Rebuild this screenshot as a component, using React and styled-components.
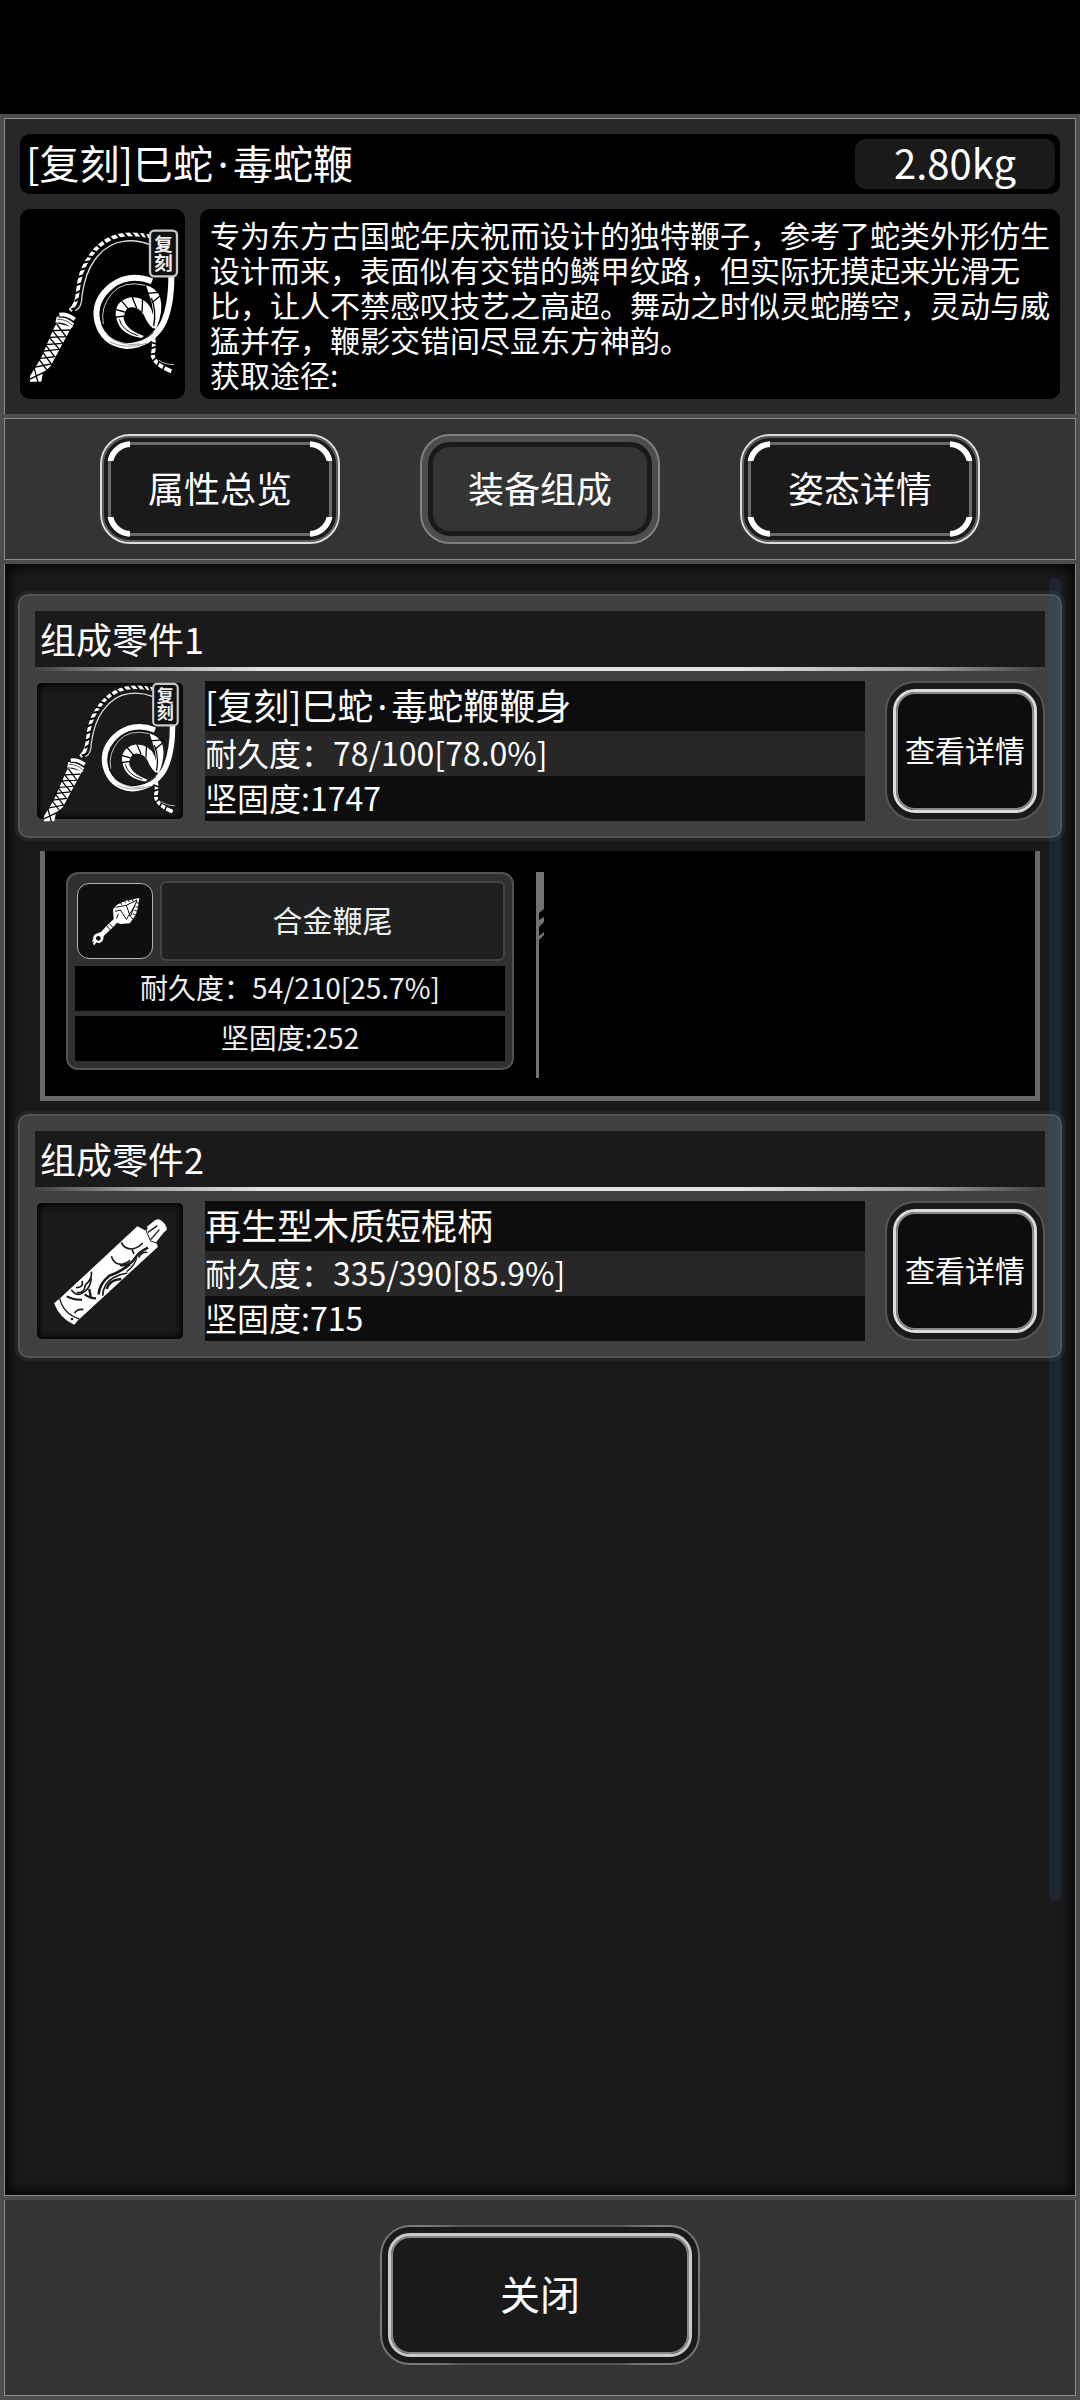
import React from "react";
import styled, { createGlobalStyle, css } from "styled-components";

const GlobalStyle = createGlobalStyle`
  * {
    box-sizing: border-box;
  }
  body {
    margin: 0;
    background-color: #000;
    color: #fff;
    font-family: "Noto Sans CJK SC", "Noto Sans", sans-serif;
  }
  button {
    margin: 0;
    color: inherit;
    font-family: inherit;
    cursor: pointer;
  }
  h1, h2, h3, p {
    margin: 0;
    font-weight: 400;
  }
`;

const Page = styled.div`
  min-height: 100vh;
  padding-top: 114px;
  display: flex;
  flex-direction: column;
`;

const Window = styled.main`
  flex: 1;
  padding: 4px;
  display: flex;
  flex-direction: column;
  gap: 4px;
  background-color: #4d4d4d;
`;

/* header */

const Header = styled.header`
  padding: 15px;
  display: flex;
  flex-direction: column;
  gap: 15px;
  background-color: #282828;
  border: 1px solid #8a8a8a;
  border-bottom: none;
`;

const TitleBar = styled.div`
  height: 60px;
  padding: 5px 5px 5px 6px;
  display: flex;
  justify-content: space-between;
  background-color: #000;
  border-radius: 10px;
`;

const Title = styled.h1`
  font-size: 40px;
  line-height: 46px;
`;

const MiddleDot = styled.span`
  display: inline-block;
  width: 0.5em;
  font-family: "Noto Sans", sans-serif;
  line-height: 1;
  text-align: center;
`;

const Weight = styled.span`
  width: 200px;
  height: 50px;
  font-size: 40px;
  line-height: 46px;
  text-align: center;
  background-color: #1a1a1a;
  border-radius: 10px;
`;

const Summary = styled.div`
  display: flex;
  gap: 15px;
`;

const Portrait = styled.div`
  width: 165px;
  flex-shrink: 0;
  display: flex;
  align-items: center;
  justify-content: center;
  background-color: #000;
  border-radius: 10px;
`;

const Description = styled.div`
  flex: 1;
  min-height: 190px;
  padding: 8px 10px 7px;
  font-size: 30px;
  line-height: 35px;
  background-color: #000;
  border-radius: 10px;
`;

/* tabs */

const Tabs = styled.nav`
  padding: 15px;
  display: flex;
  justify-content: center;
  gap: 80px;
  background-color: #333434;
  border: 1px solid #8a8a8a;
`;

const idleTab = css`
  background-color: #1a1a1a;
  border: 2px solid #dcdcdc;
  box-shadow: inset 0 0 0 2px #5c5c5c;

  &::before {
    content: "";
    position: absolute;
    inset: 6px;
    border: 3px solid #6a6a6a;
    border-radius: 22px;
  }

  &::after {
    content: "";
    position: absolute;
    inset: 5px;
    border: 6px solid #fff;
    border-radius: 24px;
    mask: linear-gradient(#000 0 0) top left / 23px 20px no-repeat,
      linear-gradient(#000 0 0) top right / 23px 20px no-repeat,
      linear-gradient(#000 0 0) bottom left / 23px 20px no-repeat,
      linear-gradient(#000 0 0) bottom right / 23px 20px no-repeat;
  }
`;

const currentTab = css`
  background-color: #4d4d4d;
  border: 2px solid #808080;

  &::before {
    content: "";
    position: absolute;
    z-index: -1;
    inset: 6px;
    background-color: #333434;
    border: 5px solid #1a1a1a;
    border-radius: 22px;
  }
`;

const Tab = styled.button`
  position: relative;
  z-index: 0;
  width: 240px;
  height: 110px;
  padding: 0 0 4px;
  font-size: 36px;
  line-height: 40px;
  border-radius: 30px;
  ${({ $current }) => ($current ? currentTab : idleTab)}
`;

/* list of parts */

const Body = styled.section`
  position: relative;
  flex: 1;
  padding: 30px 13px;
  display: flex;
  flex-direction: column;
  gap: 13px;
  background-color: #1a1a1a;
  border: 1px solid #8a8a8a;
  border-top: none;
  box-shadow: inset 0 0 14px 2px #000;
`;

const ScrollTrack = styled.div`
  position: absolute;
  top: 14px;
  right: 14px;
  bottom: 18%;
  width: 12px;
  background-color: rgba(56, 88, 140, 0.2);
  border-radius: 6px;
`;

const Card = styled.article`
  padding: 15px;
  background-color: #404040;
  border: 2px solid #545454;
  border-radius: 10px;
  box-shadow: 0 0 0 3px #242424;
`;

const CardTitle = styled.h2`
  height: 56px;
  padding-left: 5px;
  font-size: 36px;
  line-height: 55px;
  background-color: #1a1a1a;
`;

const Rule = styled.div`
  height: 4px;
  margin-bottom: 10px;
  background: linear-gradient(
    90deg,
    #404040 0%,
    #a0a0a0 10%,
    #e0e0e0 22%,
    #e0e0e0 70%,
    #a0a0a0 88%,
    #404040 100%
  );
`;

const CardRow = styled.div`
  display: flex;
  gap: 20px;
`;

const PartIcon = styled.div`
  width: 146px;
  height: 136px;
  margin: 2px;
  flex-shrink: 0;
  display: flex;
  align-items: center;
  justify-content: center;
  background-color: #1a1a1a;
  border-radius: 5px;
  box-shadow: inset 0 0 6px 2px #000;

  svg {
    flex-shrink: 0;
  }
`;

const Info = styled.div`
  flex: 1;
  background-color: #0d0d0d;
`;

const PartName = styled.h3`
  height: 50px;
  font-size: 36px;
  line-height: 46px;
`;

const Stat = styled.p`
  height: 45px;
  font-size: 32px;
  line-height: 42px;
  background-color: ${({ $light }) => ($light ? "#272727" : "transparent")};
`;

const FramedButton = styled.button`
  position: relative;
  width: ${({ $large }) => ($large ? "320px" : "160px")};
  height: 140px;
  padding: 6px;
  background-color: #1a1a1a;
  border: 2px solid #555;
  border-radius: 30px;

  &::before {
    content: "";
    display: ${({ $large }) => ($large ? "block" : "none")};
    position: absolute;
    inset: -2px;
    border: 2px solid #a0a0a0;
    border-radius: 30px;
    mask: radial-gradient(#000 40%, transparent) top left / 80px 80px no-repeat,
      radial-gradient(#000 40%, transparent) top right / 80px 80px no-repeat,
      radial-gradient(#000 40%, transparent) bottom left / 80px 80px no-repeat,
      radial-gradient(#000 40%, transparent) bottom right / 80px 80px no-repeat;
  }
`;

const ButtonFace = styled.span`
  height: 100%;
  padding-bottom: 5px;
  display: flex;
  align-items: center;
  justify-content: center;
  font-size: ${({ $large }) => ($large ? "40px" : "30px")};
  white-space: nowrap;
  background-color: ${({ $large }) => ($large ? "#1a1a1a" : "#0d0d0d")};
  border: 3px solid ${({ $large }) => ($large ? "#cacaca" : "#dcdcdc")};
  border-radius: 22px;
  box-shadow: inset 0 0 0 2px #868686;
`;

/* attached parts */

const Attachments = styled.div`
  min-height: 250px;
  margin: 0 22px;
  padding: 21px 21px 18px;
  display: flex;
  align-items: flex-start;
  gap: 22px;
  background-color: #000;
  border: 5px solid #696969;
  border-top: none;
`;

const SubCard = styled.article`
  width: 448px;
  padding: 7px;
  background-color: #303030;
  border: 2px solid #525252;
  border-radius: 12px;
`;

const SubHead = styled.div`
  height: 80px;
  margin-bottom: 5px;
  padding-left: 2px;
  display: flex;
  align-items: center;
  gap: 7px;
`;

const SubIcon = styled.div`
  width: 76px;
  height: 76px;
  flex-shrink: 0;
  display: flex;
  background-color: #0f0f0f;
  border: 1px solid #b4b4b4;
  border-radius: 12px;
`;

const SubName = styled.h3`
  flex: 1;
  height: 80px;
  font-size: 30px;
  line-height: 72px;
  text-align: center;
  color: #f0f0f0;
  background-color: #1f2120;
  border: 2px solid #434343;
  border-radius: 6px;
`;

const SubStat = styled.p`
  height: 45px;
  font-size: 28px;
  line-height: 42px;
  text-align: center;
  color: #f0f0f0;
  background-color: #000;

  & + & {
    margin-top: 5px;
  }
`;

const Footer = styled.footer`
  padding: 25px 15px 30px;
  display: flex;
  justify-content: center;
  background-color: #333434;
  border: 1px solid #8a8a8a;
  border-top: none;
`;

const WhipIcon = ({ size }) => (
  <svg
    width={size}
    height={size}
    viewBox="30 64 495 495"
    fill="none"
    stroke="#fff"
    aria-hidden="true"
  >
    {/* grip */}
    <path
      d="M60 543V526L92 474L132 382L140 368L186 378L178 392L152 440L122 496L98 520L94 543Z"
      fill="#fff"
      stroke="none"
    />
    <g stroke="#000" strokeWidth="4">
      <path d="M58 536L112 510L86 474L134 468L106 432L158 428L128 390L180 388" />
      <path d="M84 545L72 500L124 490L96 452L148 446L118 410L168 408L140 370" />
    </g>
    <path
      d="M140 348Q166 346 192 368L186 382Q164 364 136 366Z"
      fill="#fff"
      stroke="none"
    />
    <path d="M148 342Q170 338 194 356" strokeWidth="12" />
    <path d="M142 356Q166 354 188 374" stroke="#000" strokeWidth="2" />
    <path d="M146 350Q170 346 192 364" stroke="#000" strokeWidth="3" />
    {/* cord */}
    <path
      d="M180 330Q200 312 203 276Q209 208 238 170Q274 116 330 104Q370 97 420 107"
      strokeWidth="11"
    />
    <path
      d="M184 326l22 -6M194 302l18 -12M196 278l20 -10M198 254l20 -8M203 230l20 -8M208 208l22 -6M218 186l22 -4M230 166l20 4M244 148l18 8M260 132l14 12M278 118l12 14M298 107l12 14M318 99l12 14M340 95l12 14M362 94l12 14M384 94l12 16M404 98l8 14"
      stroke="#000"
      strokeWidth="6"
    />
    <path
      d="M196 330Q216 322 216 284Q226 216 254 178Q290 128 340 122Q380 116 420 132"
      stroke="#ddd"
      strokeWidth="4"
    />
    {/* inner coil */}
    <g fill="#fff" stroke="none">
      <path d="M408 254Q438 262 450 288Q462 330 438 386L426 378Q436 330 418 284Z" />
      <path d="M317 346Q314 300 362 290Q406 288 424 326Q434 352 430 384Q412 370 402 344Q388 318 362 320Q342 324 342 350Z" />
      <path d="M318 340L340 346Q342 386 402 406L394 412Q320 400 318 340Z" />
    </g>
    <path
      d="M328 356Q336 390 384 405"
      stroke="#000"
      strokeWidth="3"
    />
    <path
      d="M412 278L456 274M426 306L450 286M366 288L380 322M398 292L396 334M334 300L356 326M316 326L344 334M314 350L344 346"
      stroke="#000"
      strokeWidth="4"
    />
    <path d="M424 292Q440 330 431 376" stroke="#000" strokeWidth="4" />
    {/* big loop */}
    <path
      d="M426 242Q360 216 306 254Q248 300 262 362Q280 430 350 436Q420 432 456 374Q484 322 484 228"
      strokeWidth="18"
    />
    <path
      d="M410 250Q340 232 302 276Q264 320 276 374Q292 414 350 426Q400 424 430 396"
      stroke="#000"
      strokeWidth="3"
    />
    <path
      d="M406 254Q340 238 306 278Q270 320 280 370"
      stroke="#ccc"
      strokeWidth="3"
    />
    <path
      d="M300 424Q350 448 410 428M290 402Q330 438 390 430"
      stroke="#666"
      strokeWidth="2"
    />
    {/* tip */}
    <path
      d="M430 412Q434 436 428 464Q434 492 484 512"
      strokeWidth="12"
    />
    <path
      d="M420 424l20 6M420 444l20 -6M418 462l22 -4M424 484l16 -14M440 498l8 -16M458 508l6 -14"
      stroke="#000"
      strokeWidth="5"
    />
    <path d="M446 478Q464 492 492 492" stroke="#bbb" strokeWidth="3" />
    {/* edition stamp */}
    <rect
      x="420"
      y="90"
      width="81"
      height="137"
      rx="13"
      fill="#111"
      stroke="#c8c8c8"
      strokeWidth="7"
    />
    <text
      x="460"
      y="158"
      fill="#eee"
      stroke="none"
      fontFamily="'Noto Sans CJK SC', sans-serif"
      fontWeight="700"
      fontSize="56"
      textAnchor="middle"
      writingMode="vertical-rl"
    >
      复刻
    </text>
  </svg>
);

const GripIcon = () => (
  <svg
    width="150"
    height="150"
    viewBox="45 977 450 450"
    fill="none"
    stroke="#1a1a1a"
    aria-hidden="true"
  >
    <path
      d="M352 1068L378 1081L384 1073L380 1070L402 1052Q410 1045 420 1048Q438 1058 441 1078L432 1086L408 1116L414 1129L172 1352L163 1363Q120 1346 102 1299L120 1284Z"
      fill="#fff"
      stroke="none"
    />
    <path d="M119 1284Q130 1330 178 1346" strokeWidth="4" />
    <circle cx="156" cy="1346" r="4" fill="#1a1a1a" stroke="none" />
    <path d="M384 1086L412 1066M392 1108L418 1078" strokeWidth="4" />
    <path d="M378 1080L392 1112L410 1118" strokeWidth="3" />
    <g strokeWidth="5">
      <path d="M304 1116Q312 1136 336 1136Q356 1132 368 1118" />
      <path d="M336 1136Q338 1144 342 1150" />
      <path d="M274 1158Q282 1184 306 1182Q320 1180 330 1170" />
      <path d="M300 1184Q330 1190 346 1162Q356 1146 384 1132" strokeWidth="7" />
      <path d="M236 1272Q238 1240 268 1216Q300 1206 330 1182" strokeWidth="8" />
      <path d="M248 1276Q250 1238 280 1222Q300 1212 322 1208" />
      <path d="M260 1256Q268 1228 304 1226" strokeWidth="8" />
      <path d="M356 1162Q364 1144 382 1146" />
      <path d="M320 1204Q346 1184 350 1162" strokeWidth="4" />
      <path d="M214 1204Q218 1226 196 1244Q192 1272 170 1266" />
      <path d="M186 1232Q192 1252 168 1252M154 1258Q172 1284 196 1262Q212 1250 214 1222" />
      <path d="M140 1278Q164 1290 186 1288" strokeWidth="6" />
      <path d="M194 1272Q210 1284 228 1284M208 1256L212 1280" strokeWidth="7" />
      <path d="M164 1328Q174 1314 190 1318" />
    </g>
  </svg>
);

const TailIcon = () => (
  <svg
    width="74"
    height="74"
    viewBox="173 42 222 222"
    fill="none"
    stroke="#0f0f0f"
    aria-hidden="true"
  >
    <path
      d="M357 84L353 112L346 136L328 160L300 162L290 158L278 172L250 198Q250 216 236 220L228 217L222 226L218 222L221 214L215 217L218 208Q218 192 232 190L242 186L264 162L280 148L278 118L290 104L316 92Z"
      fill="#fff"
      stroke="none"
    />
    <circle cx="234" cy="205" r="7" fill="#0f0f0f" stroke="none" />
    <path
      d="M286 112L318 106L350 90M350 90L330 140L318 106M284 124L300 120L318 148L344 106M258 166L272 182M266 160L280 174"
      strokeWidth="3"
    />
    <path
      d="M300 96l4 8M312 90l4 8M324 88l3 8M336 86l2 8M358 100l-10 -2M356 112l-10 -2M352 124l-10 -3M348 136l-10 -4M340 148l-8 -6"
      strokeWidth="3"
    />
    <path d="M288 146L294 132" strokeWidth="3" />
  </svg>
);

const Notch = () => (
  <svg width="8" height="206" viewBox="0 0 8 206" aria-hidden="true">
    <path
      d="M0 0H8V37L3 41V48L8 45V50L3 55V64L8 60V63L3 68V206H0Z"
      fill="#737373"
    />
  </svg>
);

const tabs = ["属性总览", "装备组成", "姿态详情"];

const parts = [
  {
    name: "[复刻]巳蛇·毒蛇鞭鞭身",
    durability: "78/100[78.0%]",
    firmness: 1747,
    icon: <WhipIcon size={150} />,
    attached: {
      name: "合金鞭尾",
      durability: "54/210[25.7%]",
      firmness: 252,
    },
  },
  {
    name: "再生型木质短棍柄",
    durability: "335/390[85.9%]",
    firmness: 715,
    icon: <GripIcon />,
  },
];

// the CJK font draws the middle dot a full em wide, names need a narrow one
const ItemName = ({ name }) =>
  name.split("·").map((piece, i) => (
    <React.Fragment key={piece}>
      {i > 0 && <MiddleDot>·</MiddleDot>}
      {piece}
    </React.Fragment>
  ));

const PartCard = ({ index, part }) => (
  <Card>
    <CardTitle>{`组成零件${index}`}</CardTitle>
    <Rule />
    <CardRow>
      <PartIcon>{part.icon}</PartIcon>
      <Info>
        <PartName>
          <ItemName name={part.name} />
        </PartName>
        <Stat $light>{`耐久度：${part.durability}`}</Stat>
        <Stat>{`坚固度:${part.firmness}`}</Stat>
      </Info>
      <FramedButton type="button">
        <ButtonFace>查看详情</ButtonFace>
      </FramedButton>
    </CardRow>
  </Card>
);

const AttachedPart = ({ part }) => (
  <Attachments>
    <SubCard>
      <SubHead>
        <SubIcon>
          <TailIcon />
        </SubIcon>
        <SubName>{part.name}</SubName>
      </SubHead>
      <SubStat>{`耐久度：${part.durability}`}</SubStat>
      <SubStat>{`坚固度:${part.firmness}`}</SubStat>
    </SubCard>
    <Notch />
  </Attachments>
);

const App = () => (
  <>
    <GlobalStyle />
    <Page>
      <Window>
        <Header>
          <TitleBar>
            <Title>
              <ItemName name="[复刻]巳蛇·毒蛇鞭" />
            </Title>
            <Weight>2.80kg</Weight>
          </TitleBar>
          <Summary>
            <Portrait>
              <WhipIcon size={165} />
            </Portrait>
            <Description>
              <p>
                专为东方古国蛇年庆祝而设计的独特鞭子，参考了蛇类外形仿生设计而来，表面似有交错的鳞甲纹路，但实际抚摸起来光滑无比，让人不禁感叹技艺之高超。舞动之时似灵蛇腾空，灵动与威猛并存，鞭影交错间尽显东方神韵。
              </p>
              <p>获取途径:</p>
            </Description>
          </Summary>
        </Header>
        <Tabs>
          {tabs.map((tab, i) => (
            <Tab key={tab} type="button" $current={i === 1}>
              {tab}
            </Tab>
          ))}
        </Tabs>
        <Body>
          {parts.map((part, i) => (
            <React.Fragment key={part.name}>
              <PartCard index={i + 1} part={part} />
              {part.attached && <AttachedPart part={part.attached} />}
            </React.Fragment>
          ))}
          <ScrollTrack />
        </Body>
        <Footer>
          <FramedButton type="button" $large>
            <ButtonFace $large>关闭</ButtonFace>
          </FramedButton>
        </Footer>
      </Window>
    </Page>
  </>
);

export default App;
